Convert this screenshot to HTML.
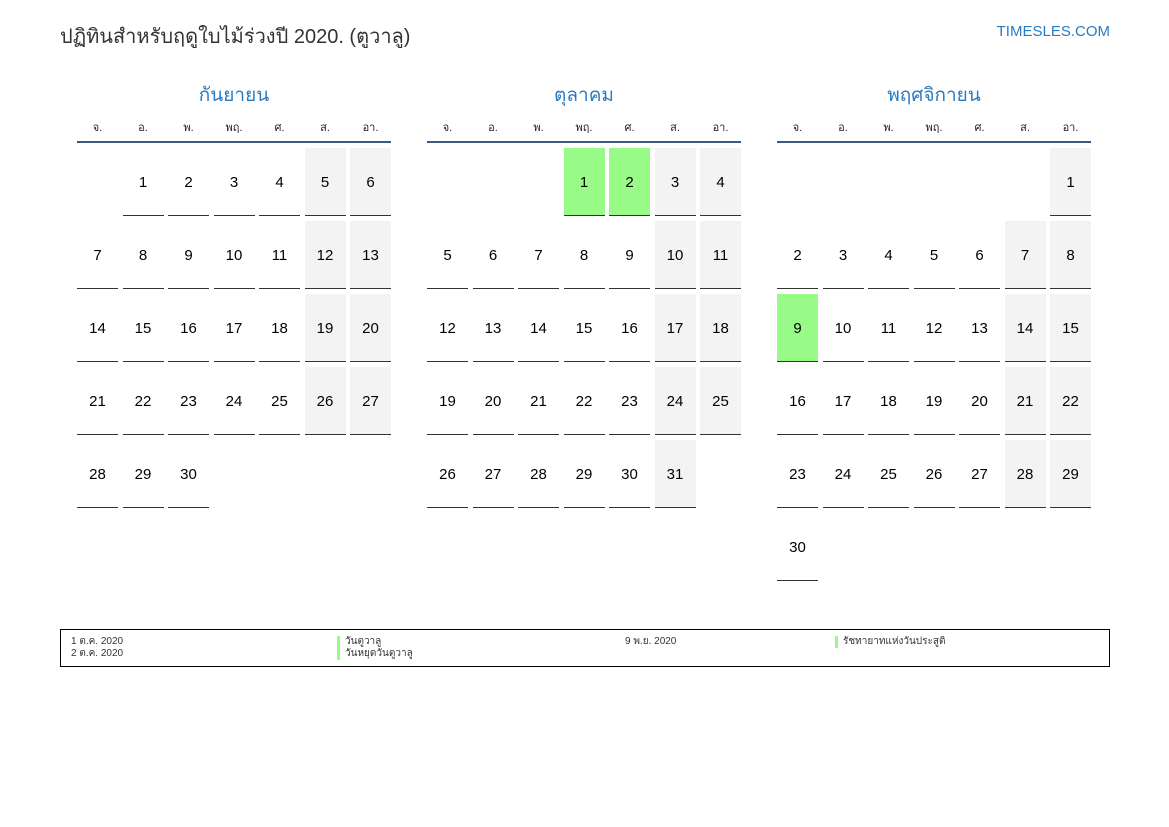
<!DOCTYPE html>
<html><head><meta charset="utf-8">
<style>
*{margin:0;padding:0;box-sizing:border-box}
body{width:1169px;height:827px;background:#fff;font-family:"Liberation Sans","Noto Sans CJK SC",sans-serif;position:relative;overflow:hidden;color:#000}
.title{position:absolute;left:60px;top:20px;font-size:20px;color:#333}
.site{position:absolute;right:59px;top:23px;font-size:15px;color:#2a7ac0}
.m{position:absolute;top:82px;width:314px}
.mt{text-align:center;font-size:19px;color:#2a7ac0;height:28px;line-height:28px}
.dn{display:grid;grid-template-columns:repeat(7,41px);column-gap:4.5px;font-size:11px;text-align:center;height:33px;line-height:36px;border-bottom:2px solid #3a5a80;color:#222}
.g{display:grid;grid-template-columns:repeat(7,41px);column-gap:4.5px;row-gap:5px;grid-auto-rows:68px;margin-top:5px}
.g div{border-bottom:1px solid #333;text-align:center;line-height:70px;font-size:15px}
.g div.e{border:none}
.g div.w{background:#f3f3f3}
.g div.h{background:#98fb88}
.leg{position:absolute;left:60px;top:629px;width:1050px;height:38px;border:1px solid #000;font-size:10px;color:#333}
.leg span{position:absolute;line-height:12px}
.bar{border-left:3px solid #98fb88;padding-left:5px}
</style></head><body>
<div class="title">ปฏิทินสำหรับฤดูใบไม้ร่วงปี 2020. (ตูวาลู)</div>
<div class="site">TIMESLES.COM</div>

<div class="m" style="left:77px">
<div class="mt">กันยายน</div>
<div class="dn"><span>จ.</span><span>อ.</span><span>พ.</span><span>พฤ.</span><span>ศ.</span><span>ส.</span><span>อา.</span></div>
<div class="g">
<div class="e"></div><div>1</div><div>2</div><div>3</div><div>4</div><div class="w">5</div><div class="w">6</div>
<div>7</div><div>8</div><div>9</div><div>10</div><div>11</div><div class="w">12</div><div class="w">13</div>
<div>14</div><div>15</div><div>16</div><div>17</div><div>18</div><div class="w">19</div><div class="w">20</div>
<div>21</div><div>22</div><div>23</div><div>24</div><div>25</div><div class="w">26</div><div class="w">27</div>
<div>28</div><div>29</div><div>30</div>
</div></div>

<div class="m" style="left:427px">
<div class="mt">ตุลาคม</div>
<div class="dn"><span>จ.</span><span>อ.</span><span>พ.</span><span>พฤ.</span><span>ศ.</span><span>ส.</span><span>อา.</span></div>
<div class="g">
<div class="e"></div><div class="e"></div><div class="e"></div><div class="h">1</div><div class="h">2</div><div class="w">3</div><div class="w">4</div>
<div>5</div><div>6</div><div>7</div><div>8</div><div>9</div><div class="w">10</div><div class="w">11</div>
<div>12</div><div>13</div><div>14</div><div>15</div><div>16</div><div class="w">17</div><div class="w">18</div>
<div>19</div><div>20</div><div>21</div><div>22</div><div>23</div><div class="w">24</div><div class="w">25</div>
<div>26</div><div>27</div><div>28</div><div>29</div><div>30</div><div class="w">31</div>
</div></div>

<div class="m" style="left:777px">
<div class="mt">พฤศจิกายน</div>
<div class="dn"><span>จ.</span><span>อ.</span><span>พ.</span><span>พฤ.</span><span>ศ.</span><span>ส.</span><span>อา.</span></div>
<div class="g">
<div class="e"></div><div class="e"></div><div class="e"></div><div class="e"></div><div class="e"></div><div class="e"></div><div class="w">1</div>
<div>2</div><div>3</div><div>4</div><div>5</div><div>6</div><div class="w">7</div><div class="w">8</div>
<div class="h">9</div><div>10</div><div>11</div><div>12</div><div>13</div><div class="w">14</div><div class="w">15</div>
<div>16</div><div>17</div><div>18</div><div>19</div><div>20</div><div class="w">21</div><div class="w">22</div>
<div>23</div><div>24</div><div>25</div><div>26</div><div>27</div><div class="w">28</div><div class="w">29</div>
<div>30</div>
</div></div>

<div class="leg">
<span style="left:10px;top:6px">1 ต.ค. 2020<br>2 ต.ค. 2020</span>
<span class="bar" style="left:276px;top:6px">วันตูวาลู</span>
<span class="bar" style="left:276px;top:18px">วันหยุดวันตูวาลู</span>
<span style="left:564px;top:6px">9 พ.ย. 2020</span>
<span class="bar" style="left:774px;top:6px">รัชทายาทแห่งวันประสูติ</span>
</div>
</body></html>
